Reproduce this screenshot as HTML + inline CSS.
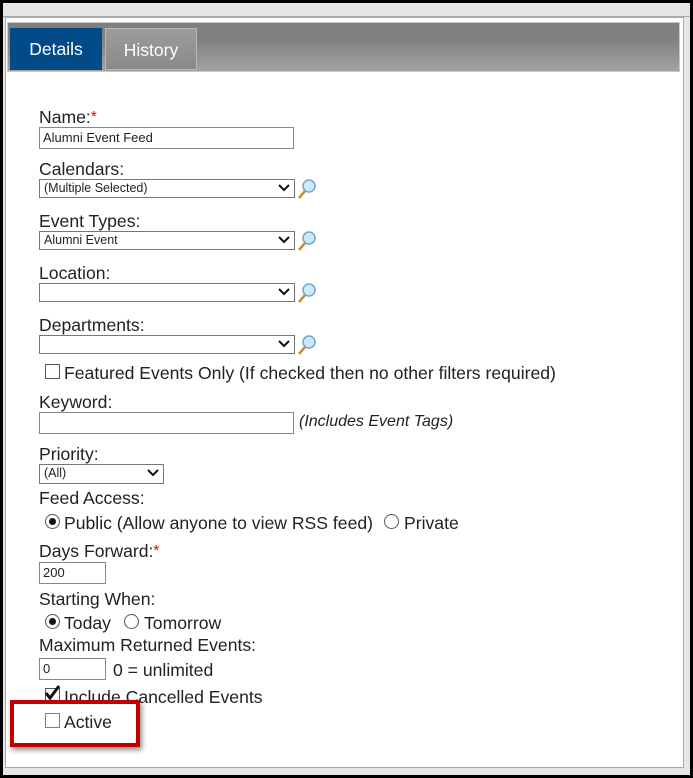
<!DOCTYPE html>
<html><head><style>
body{margin:0;width:693px;height:778px;background:#000;position:relative;overflow:hidden;font-family:"Liberation Sans",Arial,sans-serif;color:#222}
.a{position:absolute}
#outer{left:3px;top:3px;width:687px;height:772px;background:#e6e6e6}
#panel{left:5px;top:17px;width:677px;height:749px;background:#fff;border:1px solid #a8a8a8}
#bar{left:7px;top:22px;width:671px;height:48px;background:linear-gradient(#7f7f7f 0%,#808080 35%,#a3a3a3 100%);border:1px solid #c8c8c8}
.tab{top:28px;height:42px;color:#fff;font-size:17.5px;line-height:42px;text-align:center}
.lbl{font-size:17.6px;left:39px;line-height:18px}
.inp{left:39px;border:1px solid #888;background:#fff;font-size:13px;line-height:20px;padding-left:3px;box-sizing:border-box;height:22px}
.sel{left:39px;height:19px;border:1px solid #777;background:#fff;font-size:12.5px;line-height:17px;padding-left:4px;box-sizing:border-box}
.chev{position:absolute;right:4px;top:3px}
.mag{left:296px}
.cb{width:13px;height:13px;border:1px solid #555;background:#fff}
.rd{width:13px;height:13px;border:1px solid #555;border-radius:50%;background:#fff}
.txt{font-size:17.6px;line-height:18px}
.star{color:#e00;font-size:15px;vertical-align:top}
</style></head><body>
<div class="a" id="outer"></div>
<div class="a" style="left:3px;top:16px;width:687px;height:1px;background:#aaa"></div>
<div class="a" id="panel"></div>
<div class="a" id="bar"></div>
<div class="a tab" style="left:10px;width:92px;background:#004b87">Details</div>
<div class="a tab" style="left:105px;width:92px;background:linear-gradient(#9c9c9c,#8a8a8a);border:1px solid #b8b8b8;box-sizing:border-box;height:42px">History</div>

<div class="a lbl" style="top:108px">Name:<span class="star">*</span></div>
<div class="a inp" style="top:127px;width:255px">Alumni Event Feed</div>

<div class="a lbl" style="top:160px">Calendars:</div>
<div class="a sel" style="top:179px;width:256px">(Multiple Selected)<svg class="chev" width="12" height="9" viewBox="0 0 12 9"><path d="M1 2l5 5 5-5" fill="none" stroke="#111" stroke-width="2"/></svg></div>
<svg class="a mag" style="top:178px" width="22" height="22" viewBox="0 0 22 22"><line x1="3" y1="20" x2="9" y2="13" stroke="#d08a30" stroke-width="2.5"/><circle cx="13" cy="8" r="6" fill="#cfe8f8" stroke="#6aa8d0" stroke-width="1.5"/></svg>

<div class="a lbl" style="top:212px">Event Types:</div>
<div class="a sel" style="top:231px;width:256px">Alumni Event<svg class="chev" width="12" height="9" viewBox="0 0 12 9"><path d="M1 2l5 5 5-5" fill="none" stroke="#111" stroke-width="2"/></svg></div>
<svg class="a mag" style="top:230px" width="22" height="22" viewBox="0 0 22 22"><line x1="3" y1="20" x2="9" y2="13" stroke="#d08a30" stroke-width="2.5"/><circle cx="13" cy="8" r="6" fill="#cfe8f8" stroke="#6aa8d0" stroke-width="1.5"/></svg>

<div class="a lbl" style="top:264px">Location:</div>
<div class="a sel" style="top:283px;width:256px"><svg class="chev" width="12" height="9" viewBox="0 0 12 9"><path d="M1 2l5 5 5-5" fill="none" stroke="#111" stroke-width="2"/></svg></div>
<svg class="a mag" style="top:282px" width="22" height="22" viewBox="0 0 22 22"><line x1="3" y1="20" x2="9" y2="13" stroke="#d08a30" stroke-width="2.5"/><circle cx="13" cy="8" r="6" fill="#cfe8f8" stroke="#6aa8d0" stroke-width="1.5"/></svg>

<div class="a lbl" style="top:316px">Departments:</div>
<div class="a sel" style="top:335px;width:256px"><svg class="chev" width="12" height="9" viewBox="0 0 12 9"><path d="M1 2l5 5 5-5" fill="none" stroke="#111" stroke-width="2"/></svg></div>
<svg class="a mag" style="top:334px" width="22" height="22" viewBox="0 0 22 22"><line x1="3" y1="20" x2="9" y2="13" stroke="#d08a30" stroke-width="2.5"/><circle cx="13" cy="8" r="6" fill="#cfe8f8" stroke="#6aa8d0" stroke-width="1.5"/></svg>

<div class="a cb" style="left:45px;top:364px"></div>
<div class="a txt" style="left:64px;top:364px">Featured Events Only (If checked then no other filters required)</div>

<div class="a lbl" style="top:393px">Keyword:</div>
<div class="a inp" style="top:412px;width:255px"></div>
<div class="a" style="left:299px;top:413px;font-size:16px;font-style:italic">(Includes Event Tags)</div>

<div class="a lbl" style="top:445px">Priority:</div>
<div class="a sel" style="top:464px;width:125px;height:20px">(All)<svg class="chev" width="12" height="9" viewBox="0 0 12 9"><path d="M1 2l5 5 5-5" fill="none" stroke="#111" stroke-width="2"/></svg></div>

<div class="a lbl" style="top:489px">Feed Access:</div>
<div class="a rd" style="left:45px;top:514px"><div style="position:absolute;left:3px;top:3px;width:7px;height:7px;border-radius:50%;background:#111"></div></div>
<div class="a txt" style="left:64px;top:514px">Public (Allow anyone to view RSS feed)</div>
<div class="a rd" style="left:384px;top:514px"></div>
<div class="a txt" style="left:404px;top:514px">Private</div>

<div class="a lbl" style="top:542px">Days Forward:<span class="star">*</span></div>
<div class="a inp" style="top:562px;width:67px">200</div>

<div class="a lbl" style="top:590px">Starting When:</div>
<div class="a rd" style="left:45px;top:614px"><div style="position:absolute;left:3px;top:3px;width:7px;height:7px;border-radius:50%;background:#111"></div></div>
<div class="a txt" style="left:64px;top:614px">Today</div>
<div class="a rd" style="left:124px;top:614px"></div>
<div class="a txt" style="left:144px;top:614px">Tomorrow</div>

<div class="a lbl" style="top:636px">Maximum Returned Events:</div>
<div class="a inp" style="top:658px;width:67px">0</div>
<div class="a txt" style="left:113px;top:661px">0 = unlimited</div>

<div class="a cb" style="left:45px;top:688px"></div>
<svg class="a" style="left:43px;top:684px" width="18" height="18" viewBox="0 0 18 18"><path d="M3 9l4 5 9-12" fill="none" stroke="#111" stroke-width="3"/></svg>
<div class="a txt" style="left:64px;top:688px">Include Cancelled Events</div>

<div class="a" style="left:10px;top:700px;width:122px;height:39px;border:4px solid #c00000;box-shadow:2px 3px 5px rgba(0,0,0,.45)"></div>
<div class="a cb" style="left:45px;top:713px;border-color:#2a9ad8"></div>
<div class="a txt" style="left:64px;top:713px">Active</div>
</body></html>
